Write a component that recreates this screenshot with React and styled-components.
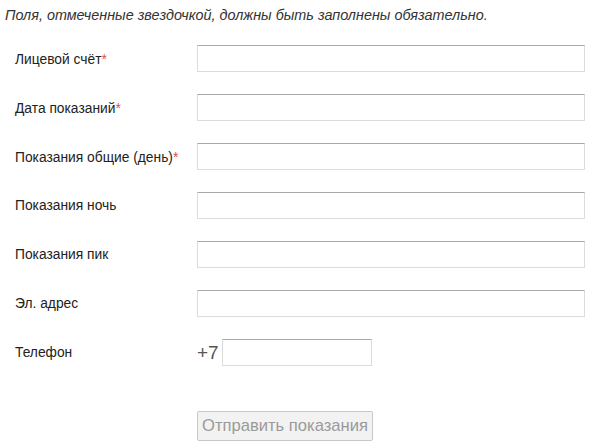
import styled, { createGlobalStyle } from "styled-components";

const GlobalStyle = createGlobalStyle`
  body {
    margin: 0;
    background: #ffffff;
    font-family: "Liberation Sans", Arial, sans-serif;
  }
`;

const fields = [
  { label: "Лицевой счёт", required: true },
  { label: "Дата показаний", required: true },
  { label: "Показания общие (день)", required: true },
  { label: "Показания ночь" },
  { label: "Показания пик" },
  { label: "Эл. адрес" },
];

export default function App() {
  return (
    <>
      <GlobalStyle />
      <Form>
        <Note>Поля, отмеченные звездочкой, должны быть заполнены обязательно.</Note>
        <Rows>
          {fields.map(f => (
            <Row key={f.label}>
              <Label>
                {f.label}
                {f.required && <Star>*</Star>}
              </Label>
              <Input type="text" />
            </Row>
          ))}
          <Row>
            <Label>Телефон</Label>
            <Phone>
              <Prefix>+7</Prefix>
              <Input type="text" $width="150px" />
            </Phone>
          </Row>
        </Rows>
        <Actions>
          <Submit type="button" disabled>
            Отправить показания
          </Submit>
        </Actions>
      </Form>
    </>
  );
}

const Form = styled.div`
  width: 592px;
  padding: 6px 0 0 0;
  box-sizing: border-box;
`;

const Note = styled.p`
  margin: 0 0 21px 5px;
  font-style: italic;
  font-size: 14.4px;
  line-height: 18px;
  color: #333;
  white-space: nowrap;
`;

const Rows = styled.div`
  display: flex;
  flex-direction: column;
  gap: 22px;
`;

const Row = styled.div`
  display: grid;
  grid-template-columns: 197px 1fr;
  align-items: center;
  height: 27px;
`;

const Label = styled.label`
  padding-left: 15px;
  font-size: 13.8px;
  color: #222;
  white-space: nowrap;
`;

const Star = styled.span`
  color: #d9534f;
  font-size: 14px;
`;

const Input = styled.input`
  box-sizing: border-box;
  width: ${p => p.$width || "388px"};
  height: 27px;
  margin: 0;
  border: 1px solid #dcdcdc;
  border-top: 1px solid #a9a9a9;
  background: #fff;
  outline: none;
`;

const Phone = styled.div`
  display: flex;
  align-items: center;
`;

const Prefix = styled.span`
  font-size: 19px;
  color: #555;
  width: 25px;
`;

const Actions = styled.div`
  padding: 45px 0 0 197px;
`;

const Submit = styled.button`
  box-sizing: border-box;
  width: 176px;
  height: 30px;
  padding: 0;
  border: 1px solid #c8c8c8;
  border-radius: 2px;
  background: #f2f2f2;
  color: #9a9a9a;
  font-family: "Liberation Sans", Arial, sans-serif;
  font-size: 16.6px;
`;
